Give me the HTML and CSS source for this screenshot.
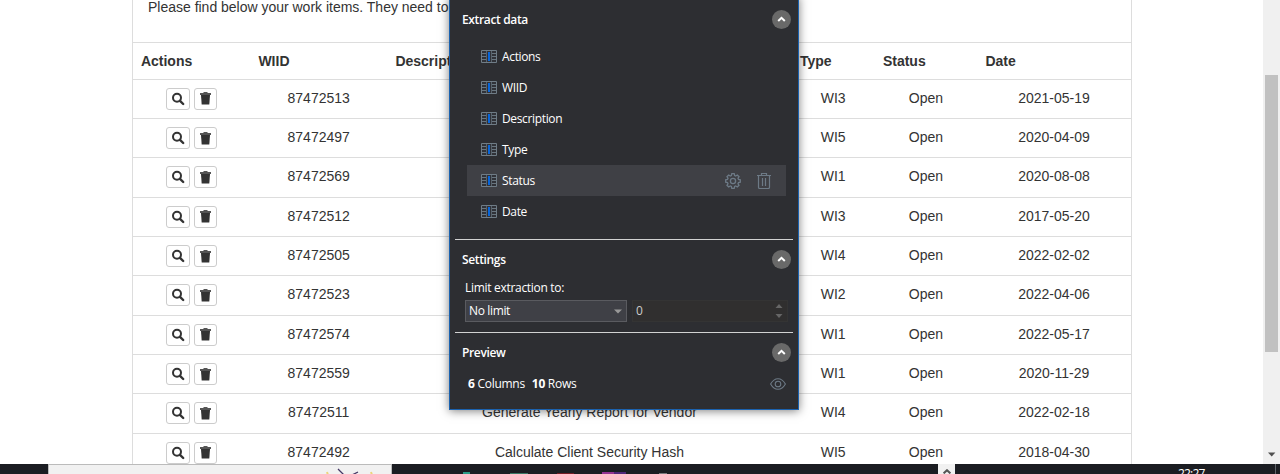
FILE: index.html
```html
<!DOCTYPE html>
<html lang="en">
<head>
<meta charset="utf-8">
<title>Work items</title>
<link rel="stylesheet" href="styles.css">
</head>
<body>
<svg class="defs" aria-hidden="true">
  <symbol id="search" viewBox="0 0 14 14"><circle cx="6" cy="5.8" r="4" fill="none" stroke="#333" stroke-width="2"/><path d="M9 8.8 12.2 12" stroke="#333" stroke-width="2.4" stroke-linecap="round"/></symbol>
  <symbol id="trash" viewBox="0 0 11 13"><path d="M3.5 0h4v1H11v2H0V1h3.5z" fill="#555"/><path d="M1 3h9l-.7 9.5H1.7z" fill="#333"/></symbol>
  <symbol id="column" viewBox="0 0 16 13"><path d="M.5.5h15v12H.5z" fill="#303238" stroke="#6f7c86"/><path d="M1 3.5h4M1 6.5h4M1 9.5h4M11 3.5h4M11 6.5h4M11 9.5h4" stroke="#697680"/><path d="M5.5 1v11M10.5 1v11" stroke="#59646d"/><path d="M7 2h2v9H7z" fill="#0766dc"/></symbol>
  <symbol id="up" viewBox="0 0 19 19"><circle cx="9.5" cy="9.5" r="9.5" fill="#696969"/><path d="m6.2 11 3.3-3.2 3.3 3.2" fill="none" stroke="#fff" stroke-width="2"/></symbol>
</svg>
<div class="screen">
  <div class="browser">
    <main class="page">
      <p class="intro">Please find below your work items. They need to</p>
      <div class="row head"><b>Actions</b><b>WIID</b><b>Description</b><b>Type</b><b>Status</b><b>Date</b></div>
      <div id="rows"></div>
    </main>
    <div class="scrollbar"><div class="thumb"></div><svg class="down" viewBox="0 0 8 5"><path d="M0 .5h7.4L3.7 4.5z" fill="#505050"/></svg></div>
  </div>
  <footer class="taskbar">
    <div class="searchbox"><svg width="60" height="9" viewBox="0 0 60 9"><path d="m12 4 7 7M32 7l-6 3" stroke="#453866" stroke-width="1.3"/><path d="m1 7 1 3M45 7l1 3" stroke="#ecd47c" stroke-width="2"/></svg></div>
    <div class="apps"><i class="app teal"></i><i class="app green"></i><i class="app red"></i><i class="app purple"></i><i class="app gray"></i></div>
    <div class="tray"><svg width="8" height="5" viewBox="0 0 8 5"><path d="m.6 4.4 3.4-3.2 3.4 3.2" fill="none" stroke="#555" stroke-width="2"/></svg></div>
    <div class="clock">22:27</div>
    <div class="desktop"></div>
  </footer>
  <aside class="panel">
    <section class="extract">
      <h2><span>Extract data</span><svg class="up"><use href="#up"/></svg></h2>
      <ul>
        <li><svg class="column"><use href="#column"/></svg><span>Actions</span></li>
        <li><svg class="column"><use href="#column"/></svg><span>WIID</span></li>
        <li><svg class="column"><use href="#column"/></svg><span>Description</span></li>
        <li><svg class="column"><use href="#column"/></svg><span>Type</span></li>
        <li class="active"><svg class="column"><use href="#column"/></svg><span>Status</span>
          <svg class="gear" viewBox="0 0 16 16" fill="none" stroke="#6d7a86" stroke-width="1.3"><path d="M6.8.7h2.4l.4 1.8 1.1.5 1.6-1 1.7 1.7-1 1.6.5 1.1 1.8.4v2.4l-1.8.4-.5 1.1 1 1.6-1.7 1.7-1.6-1-1.1.5-.4 1.8H6.8l-.4-1.8-1.1-.5-1.6 1L2 12.3l1-1.6-.5-1.1L.7 9.2V6.8l1.8-.4L3 5.3l-1-1.6L3.7 2l1.6 1 1.1-.5z"/><circle cx="8" cy="8" r="2.6"/></svg>
          <svg class="bin" viewBox="0 0 14 16" fill="none" stroke="#6d7a86" stroke-width="1.2"><path d="M0 2.5h14M4.5 2V.5h5V2M1.5 3v11.2q0 1.3 1.3 1.3h8.4q1.3 0 1.3-1.3V3M5.5 5v8M8.5 5v8"/></svg>
        </li>
        <li><svg class="column"><use href="#column"/></svg><span>Date</span></li>
      </ul>
    </section>
    <section class="settings">
      <h2><span>Settings</span><svg class="up"><use href="#up"/></svg></h2>
      <label>Limit extraction to:</label>
      <div class="fields">
        <div class="select"><span>No limit</span><svg width="8" height="5"><path d="M0 .5h8L4 4.5z" fill="#999"/></svg></div>
        <div class="number"><span>0</span><svg width="8" height="16"><path d="M.5 5h7L4 1zM.5 11h7L4 15z" fill="#666"/></svg></div>
      </div>
    </section>
    <section class="preview">
      <h2><span>Preview</span><svg class="up"><use href="#up"/></svg></h2>
      <div class="summary"><span class="count"><b>6</b> Columns</span><span class="count"><b>10</b> Rows</span>
        <svg class="eye" viewBox="0 0 16 12" fill="none" stroke="#6d7a86" stroke-width="1.1"><path d="M.6 6Q3.6.7 8 .7T15.4 6Q12.4 11.3 8 11.3T.6 6z"/><circle cx="8" cy="6" r="2.8"/></svg>
      </div>
    </section>
  </aside>
</div>
<script src="rows.js"></script>
</body>
</html>
```
FILE: styles.css
```css
* { box-sizing: border-box; }
body { margin: 0; overflow: hidden; background: #fff; color: #333; font: 14px/20px "Liberation Sans", Arial, sans-serif; }
svg { display: block; flex: none; }
.defs { position: absolute; width: 0; height: 0; }
.screen { position: relative; width: 1280px; height: 474px; overflow: hidden; }
.browser { display: flex; justify-content: space-between; height: 464px; overflow: hidden; padding-left: 132px; }
.page { width: 1000px; height: 480px; border: solid #ddd; border-width: 0 1px; }
.intro { margin: 0; height: 42px; padding: 0 15px; line-height: 14px; white-space: nowrap; letter-spacing: -.01px; }
.row { display: grid; grid-template-columns: 117.5px 137px 404.5px 83px 102.5px 1fr; height: 39.33px; border-top: 1px solid #ddd; text-align: center; line-height: 37px; }
.row > span { padding-right: .6px; }
.head { height: 36.83px; padding: 0; text-align: left; }
.head b { padding-left: 7.9px; }
.actions { display: flex; justify-content: center; gap: 4px; padding-top: 8px; }
.btn { display: flex; align-items: center; justify-content: center; width: 24px; height: 22px; border: 1px solid #ccc; border-radius: 3px; background: #fff; }
.btn + .btn { width: 23px; }
.search { width: 14px; height: 14px; }
.trash { width: 11px; height: 13px; }
.scrollbar { display: flex; flex-direction: column; justify-content: space-between; align-items: center; width: 17px; padding: 75px 0 7px; background: #f0f0f0; }
.thumb { width: 13px; height: 277px; background: #c1c1c1; }
.down { width: 8px; height: 5px; }
.taskbar { display: flex; height: 10px; background: #1b1d22; overflow: hidden; }
.searchbox { display: flex; justify-content: flex-end; width: 344px; margin-left: 48px; padding-right: 5px; background: #f1f1f1; border: 1px solid #bbb; border-bottom: 0; }
.apps { display: flex; align-items: flex-end; width: 546px; padding-left: 71px; }
.app { height: 2px; flex: none; }
.teal { width: 7px; background: #2b9c87; margin-right: 40px; }
.green { width: 18px; height: 1px; background: #397764; margin-right: 29px; }
.red { width: 17px; height: 1px; background: #741c25; margin-right: 28px; }
.purple { width: 24px; background: linear-gradient(90deg, #943392 50%, #502779 50%); margin-right: 33px; }
.gray { width: 8px; height: 1px; background: #77787b; }
.tray { display: flex; justify-content: center; padding-top: 5px; width: 17px; background: #f1f1f1; }
.clock { width: 320px; padding: 4px 0 0 223px; color: #fff; font: 12px/12px "Open Sans", sans-serif; letter-spacing: -.8px; }
.desktop { width: 1px; background: #60646a; }
.panel { position: absolute; left: 449px; top: -4px; width: 350px; height: 414px; padding: 4px 5px; border: 1px solid #1b62af; background: #2d2e32; box-shadow: 0 1px 9px rgba(0,0,0,.5); color: #fff; font: 12px/16px "Open Sans", "Segoe UI", sans-serif; letter-spacing: -.35px; white-space: nowrap; }
.extract { height: 238px; padding-top: 9px; }
h2 { display: flex; align-items: center; justify-content: space-between; height: 19px; margin: 0; padding: 0 2px 0 7px; font-size: 12px; font-weight: 600; }
.up { width: 19px; height: 19px; }
ul { list-style: none; margin: 12px 7px 0 12px; padding: 0; }
li { display: flex; align-items: center; height: 31px; padding: 0 15px 0 14px; }
.column { width: 16px; height: 13px; margin-right: 5px; }
.active { background: #3f4045; }
.gear { width: 16px; height: 16px; margin-left: auto; margin-right: 16px; }
.bin { width: 14px; height: 16px; }
.settings { height: 93px; padding-top: 10px; border-top: 1px solid #d2d2d2; }
label { display: block; height: 20px; margin: 10px 0 1px 10px; line-height: 18px; letter-spacing: -.3px; }
.fields { display: flex; gap: 5px; margin-left: 10px; }
.select, .number { display: flex; align-items: center; justify-content: space-between; height: 22px; width: 162px; padding: 0 4px 0 3px; border: 1px solid #5a5b60; background: #3f4046; }
.number { width: 156px; border-color: #343434; background: #302f2f; color: #ccc; }
.preview { padding-top: 10px; border-top: 1px solid #d2d2d2; }
.summary { display: flex; align-items: center; height: 20px; margin: 12px 7px 0 13px; letter-spacing: -.28px; }
.count + .count { margin-left: 7px; }
.eye { width: 16px; height: 12px; margin-left: auto; }
```
FILE: rows.js
```js
const items = [
  ["87472513", "", "WI3", "2021-05-19"],
  ["87472497", "", "WI5", "2020-04-09"],
  ["87472569", "", "WI1", "2020-08-08"],
  ["87472512", "", "WI3", "2017-05-20"],
  ["87472505", "", "WI4", "2022-02-02"],
  ["87472523", "", "WI2", "2022-04-06"],
  ["87472574", "", "WI1", "2022-05-17"],
  ["87472559", "", "WI1", "2020-11-29"],
  ["87472511", "Generate Yearly Report for Vendor", "WI4", "2022-02-18"],
  ["87472492", "Calculate Client Security Hash", "WI5", "2018-04-30"]
];
document.getElementById("rows").innerHTML = items.map(([id, description, type, date]) =>
  `<div class="row"><div class="actions"><span class="btn"><svg class="search"><use href="#search"/></svg></span><span class="btn"><svg class="trash"><use href="#trash"/></svg></span></div><span>${id}</span><span>${description}</span><span>${type}</span><span>Open</span><span>${date}</span></div>`
).join("");
```
